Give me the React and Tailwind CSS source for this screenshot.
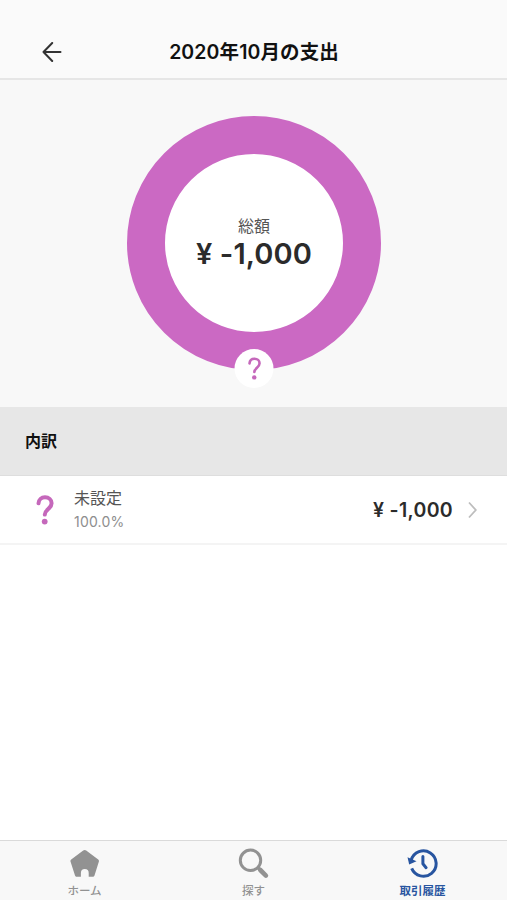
import React from "react";

const categories = [
  { name: "未設定", percent: "100.0%", amount: "¥ -1,000" },
];

function QuestionMark({ className, strokeWidth = 4 }) {
  return (
    <svg viewBox="0 0 18 30" fill="none" className={className}>
      <path
        d="M2.500 8.300C2.800 4.700 5.400 2.300 9 2.300c3.700 0 6.600 2.400 6.600 5.900 0 2.700-1.500 4.200-3.400 5.900-2.200 1.900-3.300 3.300-3.400 5.500"
        stroke="currentColor"
        strokeWidth={strokeWidth}
        strokeLinecap="round"
      />
      <circle cx="8.700" cy="26.600" r="2.900" fill="currentColor" />
    </svg>
  );
}

function BackArrow() {
  return (
    <svg viewBox="0 0 20 20" fill="none" className="h-5 w-5 text-[#333]">
      <path
        d="M10.200 1L1.500 10l8.700 9M1.500 10h17"
        stroke="currentColor"
        strokeWidth="2"
        strokeLinecap="round"
        strokeLinejoin="round"
      />
    </svg>
  );
}

function Chevron() {
  return (
    <svg viewBox="0 0 9 18" fill="none" className="h-[18px] w-[9px] text-[#bdbdbd]">
      <path d="M1 1.500L7.800 9 1 16.500" stroke="currentColor" strokeWidth="1.800" />
    </svg>
  );
}

function HomeIcon() {
  return (
    <svg viewBox="0 0 32 32" className="h-8 w-8">
      <path
        d="M14.200 2.600a2.500 2.500 0 0 1 3 0l12 8.800c.7.500.9 1.300.7 2.100l-4.400 13.900c-.3.900-1 1.400-1.900 1.400h-3.900v-3.900a3.900 3.900 0 0 0-7.800 0v3.900H7.900c-.9 0-1.600-.5-1.900-1.400L1.500 13.500c-.2-.8 0-1.600.7-2.100z"
        fill="currentColor"
      />
    </svg>
  );
}

function SearchIcon() {
  return (
    <svg viewBox="0 0 32 32" fill="none" stroke="currentColor" className="h-8 w-8">
      <circle cx="12.500" cy="12.300" r="10.200" strokeWidth="3" />
      <path d="M19.500 19.300l3 3" strokeWidth="3.400" />
      <path d="M22.300 22l5.600 5.600" strokeWidth="4.600" strokeLinecap="round" />
    </svg>
  );
}

function HistoryIcon() {
  return (
    <svg viewBox="0 0 32 32" fill="none" stroke="currentColor" className="h-8 w-8">
      <path d="M4.200 12.200A12.700 12.700 0 1 1 4.700 20.400" strokeWidth="3" />
      <path d="M0.500 9.300l9 4-7.300 3.200z" fill="currentColor" stroke="none" />
      <path d="M15.900 8.600v7.200l3.200 3.900" strokeWidth="3" strokeLinecap="round" strokeLinejoin="round" />
    </svg>
  );
}

const tabs = [
  { label: "ホーム", Icon: HomeIcon },
  { label: "探す", Icon: SearchIcon },
  { label: "取引履歴", Icon: HistoryIcon, active: true },
];

function Header() {
  return (
    <header className="grid h-20 shrink-0 grid-cols-[1fr_auto_1fr] items-end border-b-2 border-[#e6e6e6] bg-[#fafafa] pb-3.5">
      <div className="flex h-6 items-center pl-[42px]">
        <BackArrow />
      </div>
      <h1 className="pb-0.5 pl-px text-[19.5px] leading-5 font-semibold tracking-[0.1px] text-[#111]">2020年10月の支出</h1>
    </header>
  );
}

function SpendingChart() {
  return (
    <section className="flex h-[327px] shrink-0 justify-center bg-[#f8f8f8] pt-[35.5px] pl-px">
      <div className="relative flex h-[254px] w-[254px] flex-col items-center rounded-full border-[38px] border-[#cb69c3] bg-white pt-[60px]">
        <span className="text-base leading-6 text-[#555]">総額</span>
        <span className="text-[29px] leading-8 font-semibold tracking-[0.1px] whitespace-nowrap text-[#2b2b2b]">¥ -1,000</span>
        {/* Category badge on the bottom edge of the ring */}
        <div className="absolute -bottom-14 left-1/2 flex h-[39px] w-[39px] -translate-x-1/2 items-center justify-center rounded-full bg-white pt-px pl-px text-[#c568bb]">
          <QuestionMark className="h-[23px] w-[14px]" strokeWidth={3.400} />
        </div>
      </div>
    </section>
  );
}

function CategoryRow({ name, percent, amount }) {
  return (
    <li className="flex h-[69px] items-center border-b-2 border-[#f4f4f4] pr-[30px] pl-9">
      <QuestionMark className="h-[30px] w-[18px] text-[#c568bb]" />
      <div className="ml-5 flex flex-col">
        <span className="text-base leading-6 text-[#555]">{name}</span>
        <span className="text-sm leading-6 tracking-[0.2px] text-[#8e8e8e]">{percent}</span>
      </div>
      <span className="mr-[15px] ml-auto pt-[3px] text-[19.5px] font-semibold tracking-[0.3px] text-[#2b2b2b]">{amount}</span>
      <Chevron />
    </li>
  );
}

function TabBar() {
  return (
    <nav className="mt-auto grid h-[60px] shrink-0 grid-cols-3 border-t border-[#dadada] bg-[#f8f8f8]">
      {tabs.map(({ label, Icon, active }) => (
        <div
          key={label}
          className={`flex flex-col items-center pt-[7px] ${active ? "text-[#2855a0]" : "text-[#929292]"}`}
        >
          <Icon />
          <span className={`mt-px text-[11.5px] leading-5 ${active ? "font-bold" : "font-medium"}`}>{label}</span>
        </div>
      ))}
    </nav>
  );
}

export default function App() {
  return (
    <div className="flex h-[900px] w-full flex-col overflow-hidden bg-white font-['Inter','Noto_Sans_CJK_JP',sans-serif]">
      <Header />
      <SpendingChart />
      <h2 className="flex h-[69px] shrink-0 items-center border-b border-[#dedede] bg-[#e7e7e7] pl-[25px] text-base font-bold text-[#111]">
        内訳
      </h2>
      <ul>
        {categories.map((category) => (
          <CategoryRow key={category.name} {...category} />
        ))}
      </ul>
      <TabBar />
    </div>
  );
}
